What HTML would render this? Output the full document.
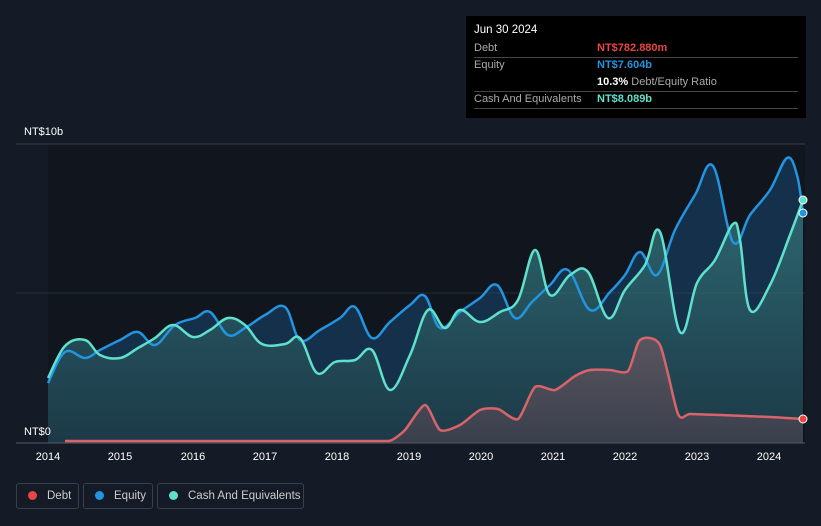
<!DOCTYPE html>
<html><head><meta charset="utf-8"><style>
body{margin:0;width:821px;height:526px;background:#151b26;font-family:"Liberation Sans",sans-serif;overflow:hidden;position:relative}
.tt{position:absolute;left:466px;top:16px;width:340px;height:102px;background:#000;color:#fff;font-size:11px}
.tt .r{position:absolute;left:8px;right:8px;border-bottom:1px solid #444;height:17px;line-height:17px}
.lab{color:#aaa}
.v{position:absolute;left:123px;top:0}
.leg{position:absolute;top:483px;height:26px;border:1px solid #3a404a;border-radius:3px;color:#ccc;font-size:11.5px;line-height:24px;box-sizing:border-box;white-space:nowrap}
.leg i{display:inline-block;width:9px;height:9px;border-radius:50%;margin:0 10px 0 11px;vertical-align:-1px}
</style></head><body>
<svg width="821" height="526" style="position:absolute;left:0;top:0">
<defs>
<linearGradient id="cg" x1="0" y1="0" x2="0" y2="1"><stop offset="0" stop-color="#2e6b72"/><stop offset="1" stop-color="#1d3a47"/></linearGradient>
<linearGradient id="dg" x1="0" y1="0" x2="0" y2="1"><stop offset="0" stop-color="#5a5560"/><stop offset="1" stop-color="#3a404c"/></linearGradient>
</defs>
<rect x="48" y="144" width="757" height="299" fill="#11151d"/>
<line x1="16" y1="144" x2="805" y2="144" stroke="#3a3f48"/>
<path id="ef" fill="#15304a"/>
<path id="cf" fill="url(#cg)" opacity="0.92"/>
<line x1="16" y1="293" x2="805" y2="293" stroke="#4a6a70" stroke-opacity="0.3"/>
<path id="df" fill="url(#dg)"/>
<path id="el" fill="none" stroke="#2394df" stroke-width="2.5"/>
<path id="cl" fill="none" stroke="#5fe0cc" stroke-width="2.5"/>
<path id="dl" fill="none" stroke="#d9636a" stroke-width="2.5"/>
<circle cx="803" cy="200" r="4" fill="#5fe0cc" stroke="#fff"/>
<circle cx="803" cy="213" r="4" fill="#2394df" stroke="#fff"/>
<circle cx="803" cy="419" r="4" fill="#e84545" stroke="#fff"/>
<line x1="16" y1="443" x2="805" y2="443" stroke="#555b66"/>
<g fill="#fff" font-size="11" text-anchor="middle">
<text x="48" y="460">2014</text><text x="120" y="460">2015</text><text x="193" y="460">2016</text><text x="265" y="460">2017</text><text x="337" y="460">2018</text><text x="409" y="460">2019</text><text x="481" y="460">2020</text><text x="553" y="460">2021</text><text x="625" y="460">2022</text><text x="697" y="460">2023</text><text x="769" y="460">2024</text>
</g>
<text x="24" y="135" fill="#fff" font-size="11">NT$10b</text>
<text x="24" y="435" fill="#fff" font-size="11">NT$0</text>
</svg>
<div class="tt">
<div style="position:absolute;left:8px;top:8px;font-size:11.5px">Jun 30 2024</div>
<div class="r" style="top:24px"><span class="lab">Debt</span><span class="v" style="color:#e84545;font-weight:bold">NT$782.880m</span></div>
<div class="r" style="top:41px;border:none"><span class="lab">Equity</span><span class="v" style="color:#2394df;font-weight:bold">NT$7.604b</span></div>
<div class="r" style="top:58px"><span class="v"><b>10.3%</b> <span class="lab">Debt/Equity Ratio</span></span></div>
<div class="r" style="top:75px"><span class="lab">Cash And Equivalents</span><span class="v" style="color:#5fe0cc;font-weight:bold">NT$8.089b</span></div>
</div>
<div class="leg" style="left:16px;width:63px"><i style="background:#e84545"></i>Debt</div>
<div class="leg" style="left:83px;width:70px"><i style="background:#2394df"></i>Equity</div>
<div class="leg" style="left:157px;width:147px"><i style="background:#5fe0cc"></i>Cash And Equivalents</div>
<script>
function P(s){return s.trim().split(/\s+/).map(function(p){return p.split(',').map(Number);});}
function smooth(a,t){var d='M'+a[0][0]+','+a[0][1];for(var i=0;i<a.length-1;i++){var p0=a[i-1]||a[i],p1=a[i],p2=a[i+1],p3=a[i+2]||p2;var c1x=p1[0]+(p2[0]-p0[0])*t,c1y=p1[1]+(p2[1]-p0[1])*t,c2x=p2[0]-(p3[0]-p1[0])*t,c2y=p2[1]-(p3[1]-p1[1])*t;d+=' C'+c1x+','+c1y+' '+c2x+','+c2y+' '+p2[0]+','+p2[1];}return d;}
var E=P("48,383 65,352 85,358 100,350 120,340 138,332 155,345 175,325 195,318 210,312 228,335 245,328 265,315 285,307 300,340 320,330 340,318 355,307 372,338 390,322 410,305 425,296 440,328 460,312 480,298 497,285 515,318 532,302 550,285 568,270 590,310 610,292 625,275 640,252 657,275 675,230 695,195 713,166 733,242 750,215 770,190 787,158 797,175 803,213");
var C=P("48,378 65,346 85,340 100,355 120,358 138,348 155,338 173,325 193,337 210,330 228,318 245,325 262,344 285,344 300,338 317,373 335,362 355,360 372,350 390,390 410,355 428,310 445,328 460,310 480,322 500,312 518,300 535,250 550,295 570,275 588,272 608,318 625,290 645,265 660,232 680,332 697,283 715,260 733,224 740,240 750,310 770,285 790,235 803,200");
var D=P("65,441 150,441 250,441 350,441 385,441 392,440 405,430 425,405 440,430 460,425 480,410 498,409 518,419 535,387 555,390 575,376 590,370 610,370 628,371 640,340 660,345 678,414 690,414 720,415 770,417 803,419");
function set(id,a,t){var d=smooth(a,t);document.getElementById(id+'l').setAttribute('d',d);document.getElementById(id+'f').setAttribute('d',d+' L'+a[a.length-1][0]+',443 L'+a[0][0]+',443 Z');}
set('e',E,0.18);set('c',C,0.18);set('d',D,0.12);
</script>
</body></html>
